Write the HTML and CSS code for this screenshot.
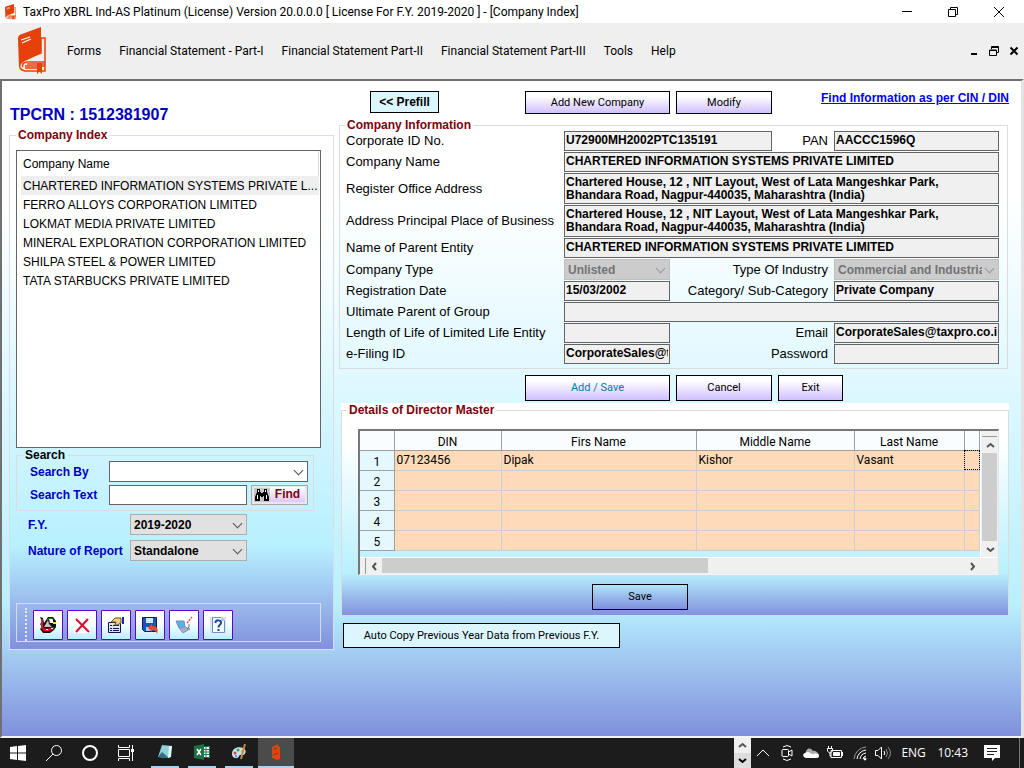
FILE: index.html
```html
<!DOCTYPE html>
<html lang="en">
<head>
<meta charset="utf-8">
<title>TaxPro XBRL Ind-AS Platinum</title>
<link rel="stylesheet" href="styles.css">
</head>
<body>
<svg class="defs" aria-hidden="true">
  <symbol id="book" viewBox="0 0 28 48">
    <path fill="#e4420a" d="M0 12C0 9 1 8 4 7L23 0V26L9 33C4 35 2 38 1 40Z"/>
    <path fill="none" stroke="#e4420a" stroke-width="1.500" d="M23 11H27V44H7C2 43 1 40 2 37C3 33 9 32 23 26V11M5 40C3 37 7 35 9 35H27M9 37H27M7 39H27M7 41H20"/>
    <path fill="#e4420a" d="M19 36H24V47L21.500 44.500L19 47Z"/>
    <path stroke="#fff" stroke-width="1.200" d="M3 13L12 10M4 16L13 12"/>
  </symbol>
</svg>
<header class="titlebar">
  <svg class="app-icon" viewBox="0 0 28 48" preserveAspectRatio="none"><use href="#book"/></svg>
  <h1>TaxPro XBRL Ind-AS Platinum (License) Version 20.0.0.0 [ License For F.Y. 2019-2020 ] - [Company Index]</h1>
  <div class="window-buttons">
    <button aria-label="Minimize"><svg width="12" height="12"><path d="M1 5.500H11"/></svg></button>
    <button aria-label="Restore"><svg width="12" height="12"><path d="M1.500 3.500H8.500V10.500H1.500ZM3.500 3V1.500H10.500V8.500H9"/></svg></button>
    <button aria-label="Close"><svg width="12" height="12"><path d="M1 1L11 11M11 1L1 11"/></svg></button>
  </div>
</header>
<nav class="menubar">
  <svg class="logo"><use href="#book"/></svg>
  <a href="#forms">Forms</a>
  <a href="#part1">Financial Statement - Part-I</a>
  <a href="#part2">Financial Statement Part-II</a>
  <a href="#part3">Financial Statement Part-III</a>
  <a href="#tools">Tools</a>
  <a href="#help">Help</a>
  <div class="child-buttons">
    <button aria-label="Minimize child"><svg width="10" height="10"><path stroke-width="2" d="M2 8H8"/></svg></button>
    <button aria-label="Restore child"><svg width="10" height="10"><path d="M2.500 3V.500H9.500V6.500H7M.500 4H7.500V9.500H.500V4M2 1.500H9M0 4.500H8"/></svg></button>
    <button aria-label="Close child"><svg width="10" height="10"><path stroke-width="2" d="M1.500 1.500L8.500 8.500M8.500 1.500L1.500 8.500"/></svg></button>
  </div>
</nav>
<main class="workspace">
  <section class="left">
    <h2 class="crn">TPCRN : 1512381907</h2>
    <fieldset class="index gradient">
      <legend>Company Index</legend>
      <div class="company-list">
        <table>
          <thead><tr><th>Company Name</th></tr></thead>
          <tbody>
            <tr class="selected"><td>CHARTERED INFORMATION SYSTEMS PRIVATE L...</td></tr>
            <tr><td>FERRO ALLOYS CORPORATION LIMITED</td></tr>
            <tr><td>LOKMAT MEDIA PRIVATE LIMITED</td></tr>
            <tr><td>MINERAL EXPLORATION CORPORATION LIMITED</td></tr>
            <tr><td>SHILPA STEEL &amp; POWER LIMITED</td></tr>
            <tr><td>TATA STARBUCKS PRIVATE LIMITED</td></tr>
          </tbody>
        </table>
      </div>
      <fieldset class="search">
        <legend>Search</legend>
        <div class="search-row">
          <label for="by">Search By</label>
          <span class="select white"><select id="by"><option></option></select></span>
        </div>
        <div class="search-row">
          <label for="text">Search Text</label>
          <input id="text" type="text">
          <button class="find">
            <svg width="16" height="14" viewBox="0 0 16 14"><rect width="16" height="14" fill="#c6c6c6"/><path d="M3 1H6V4H7V5H9V4H10V1H13V4L15 9V13H10V8H9V9H7V8H6V13H1V9L3 4Z"/><path stroke="#fff" d="M4.500 2V4M11.500 2V4M3.500 7V11M12.500 7V11"/></svg>
            <span>Find</span>
          </button>
        </div>
      </fieldset>
      <div class="option-row">
        <label for="fy">F.Y.</label>
        <span class="select"><select id="fy"><option>2019-2020</option></select></span>
      </div>
      <div class="option-row">
        <label for="nature">Nature of Report</label>
        <span class="select"><select id="nature"><option>Standalone</option></select></span>
      </div>
      <div class="toolbar">
        <i class="grip"></i>
        <button aria-label="Import"><svg viewBox="0 0 18 18"><path fill="#111" d="M1 1L4 2L5 7L9 1H14L17 5V11L15 14L11 17H4L1 13L3 11L1 8L3 6Z"/><path fill="#d5122b" d="M2 3H4V11L7 13L15 11V13L11 15H5L2 12Z"/><path fill="#c4c4c4" d="M5 11L9 4L10 8L13 11Z"/><path fill="#fff" d="M10 3H14V7H11ZM7 13H9V14H7ZM12 12H14V13H12Z"/><path fill="none" stroke="#118c36" d="M8 4C9 2 12 2 14 3"/><path fill="#f5dc28" d="M14 6H17V8H14Z"/></svg></button>
        <button aria-label="Delete"><svg viewBox="0 0 18 18"><rect x="1" y="1" width="16" height="16" fill="#fff"/><path stroke="#df0931" stroke-width="2" d="M3 3L16 16M15 3L3 16"/></svg></button>
        <button aria-label="Properties"><svg viewBox="0 0 18 18"><path fill="#d7e4fc" stroke="#141444" d="M1.500 6.500H13.500V16.500H1.500Z"/><path stroke="#16165b" d="M3 9.500H5M6 9.500H12M3 12.500H5M6 12.500H12M3 14.500H5M6 14.500H12"/><path fill="#f3cf81" stroke="#6a5120" d="M4 6L8 2H14V7L10 9H8L9 6Z"/><path fill="#1b24dc" d="M15 1H17V8H15Z"/></svg></button>
        <button aria-label="Save to disk"><svg viewBox="0 0 18 18"><path fill="#1456c5" stroke="#0a1c64" d="M1.500 1.500H15.500V15.500H3.500L1.500 13.500Z"/><path fill="#d6e6fa" d="M5 2H12V7H5Z"/><path fill="#b8c9e9" d="M5 11H10V15H5Z"/><path fill="#ed4b20" d="M7 12L11 8V10C16 10 18 13 16 18C15 15 14 14 11 14V16Z"/></svg></button>
        <button aria-label="Connect"><svg viewBox="0 0 18 18"><path fill="#4db6ee" stroke="#7d87b5" d="M1 5L9 5L10 11L4 12Z"/><path fill="#a5aece" stroke="#8a91b2" d="M4 12L10 11L15 13L8 17Z"/><path fill="none" stroke="#6c7296" d="M12 13L14 11V8"/><path stroke="#c0544c" stroke-width="1.500" stroke-dasharray="2 1" d="M12 7L17 1"/></svg></button>
        <button aria-label="Help"><svg viewBox="0 0 18 18"><rect x="1" y="1" width="16" height="16" fill="#dbe3f0"/><path fill="#f4faff" stroke="#6d91c5" d="M3.500 1.500H12L15.500 5V16.500H3.500Z"/><path fill="#bdd0ec" d="M12 2V5H15Z"/><path fill="none" stroke="#174795" stroke-width="2" d="M6.500 7C6 3 13 4 12 7C11.500 9 9.500 9 9.500 11.500M9.500 13V15"/></svg></button>
      </div>
    </fieldset>
  </section>
  <section class="right">
    <div class="top-actions">
      <button class="pale prefill">&lt;&lt; Prefill</button>
      <button class="violet wide">Add New Company</button>
      <button class="violet mid">Modify</button>
      <a href="#find">Find Information as per CIN / DIN</a>
    </div>
    <fieldset class="info">
      <legend>Company Information</legend>
      <div class="field-row"><label for="cin">Corporate ID No.</label><input class="w-cin" id="cin" value="U72900MH2002PTC135191"><label class="second" for="pan">PAN</label><input class="w-side" id="pan" value="AACCC1596Q"></div>
      <div class="field-row"><label for="cname">Company Name</label><input class="fill" id="cname" value="CHARTERED INFORMATION SYSTEMS PRIVATE LIMITED"></div>
      <div class="field-row"><label for="reg">Register Office Address</label><textarea class="fill" id="reg">Chartered House, 12 , NIT Layout, West of Lata Mangeshkar Park,
Bhandara Road, Nagpur-440035, Maharashtra (India)</textarea></div>
      <div class="field-row"><label for="place">Address Principal Place of Business</label><textarea class="fill tall" id="place">Chartered House, 12 , NIT Layout, West of Lata Mangeshkar Park,
Bhandara Road, Nagpur-440035, Maharashtra (India)</textarea></div>
      <div class="field-row"><label for="parent">Name of Parent Entity</label><input class="fill" id="parent" value="CHARTERED INFORMATION SYSTEMS PRIVATE LIMITED"></div>
      <div class="field-row"><label for="ctype">Company Type</label><span class="select off w-short"><select id="ctype" disabled><option>Unlisted</option></select></span><label class="second" for="ind">Type Of Industry</label><span class="select off w-side"><select id="ind" disabled><option>Commercial and Industrial</option></select></span></div>
      <div class="field-row"><label for="rdate">Registration Date</label><input class="w-short" id="rdate" value="15/03/2002"><label class="second" for="cat">Category/ Sub-Category</label><input class="w-side" id="cat" value="Private Company"></div>
      <div class="field-row"><label for="ult">Ultimate Parent of Group</label><input class="fill" id="ult"></div>
      <div class="field-row"><label for="life">Length of Life of Limited Life Entity</label><input class="w-short" id="life"><label class="second" for="email">Email</label><input class="w-side" id="email" value="CorporateSales@taxpro.co.in"></div>
      <div class="field-row"><label for="efil">e-Filing ID</label><input class="w-short" id="efil" value="CorporateSales@taxpro.co.in"><label class="second" for="pw">Password</label><input class="w-side" id="pw" type="password"></div>
    </fieldset>
    <div class="form-actions">
      <button class="violet wide teal">Add / Save</button>
      <button class="violet mid">Cancel</button>
      <button class="violet small">Exit</button>
    </div>
    <div class="director gradient">
      <fieldset>
        <legend>Details of Director Master</legend>
        <div class="grid">
          <div class="grid-view">
            <table>
              <colgroup><col class="c-no"><col class="c-din"><col class="c-first"><col class="c-mid"><col class="c-last"><col></colgroup>
              <thead><tr><th></th><th>DIN</th><th>Firs Name</th><th>Middle Name</th><th>Last Name</th><th></th></tr></thead>
              <tbody>
                <tr><th>1</th><td>07123456</td><td>Dipak</td><td>Kishor</td><td>Vasant</td><td class="focus"></td></tr>
                <tr><th>2</th><td></td><td></td><td></td><td></td><td></td></tr>
                <tr><th>3</th><td></td><td></td><td></td><td></td><td></td></tr>
                <tr><th>4</th><td></td><td></td><td></td><td></td><td></td></tr>
                <tr><th>5</th><td></td><td></td><td></td><td></td><td></td></tr>
              </tbody>
            </table>
          </div>
          <div class="vbar">
            <i class="split-h"></i>
            <button aria-label="Scroll up"><svg width="9" height="9"><path d="M1 6L4.500 3L8 6"/></svg></button>
            <i class="thumb"></i>
            <button aria-label="Scroll down"><svg width="9" height="9"><path d="M1 3L4.500 6L8 3"/></svg></button>
          </div>
          <div class="hbar">
            <i class="split-v"></i>
            <button aria-label="Scroll left"><svg width="9" height="9"><path d="M6 1L3 4.500L6 8"/></svg></button>
            <div class="track"><i class="thumb"></i></div>
            <button aria-label="Scroll right"><svg width="9" height="9"><path d="M3 1L6 4.500L3 8"/></svg></button>
          </div>
        </div>
        <button class="save">Save</button>
      </fieldset>
    </div>
    <button class="pale copy">Auto Copy Previous Year Data from Previous F.Y.</button>
  </section>
</main>
<footer class="taskbar">
  <button aria-label="Start"><svg viewBox="0 0 16 16"><path fill="#fff" d="M0 2L7 1V7.500H0ZM8 1L16 0V7.500H8ZM0 8.500H7V15L0 14ZM8 8.500H16V16L8 15Z"/></svg></button>
  <button aria-label="Search"><svg class="line" viewBox="0 0 16 16"><circle cx="10.500" cy="5.500" r="5"/><path d="M7 9L0 16"/></svg></button>
  <button aria-label="Cortana"><svg class="line" viewBox="0 0 16 16"><circle cx="8" cy="8" r="7" stroke-width="2"/></svg></button>
  <button aria-label="Task view"><svg class="line" viewBox="0 0 16 16"><path d="M.500 0V2.500H11.500V0M.500 4.500H11.500V11.500H.500ZM.500 16V13.500H11.500V16M14.500 0V16"/><path stroke-width="3" d="M14.500 4V7"/></svg></button>
  <div class="apps">
    <button class="app" aria-label="Notepad"><svg viewBox="0 0 16 16"><path fill="#8ed0dc" d="M5 1L15 2L12 14L1 13Z"/><path fill="#326f83" d="M1 13L5 8L12 14Z"/><path fill="#e6f6f7" d="M12 2L15 2L14 13L11 14Z"/></svg></button>
    <button class="app" aria-label="Excel"><svg viewBox="0 0 16 16"><path fill="#fff" stroke="#1d7044" d="M9 2.500H15.500V13.500H9Z"/><path stroke="#1d7044" d="M9 5.500H15M9 8H15M9 10.500H15M12 2V13"/><path fill="#1d7044" d="M0 2L10 0V16L0 14Z"/><path stroke="#fff" stroke-width="1.500" d="M3 5L7 11M7 5L3 11"/></svg></button>
    <button class="app" aria-label="Paint"><svg viewBox="0 0 16 16"><path fill="#c6e3f3" d="M1 10C1 4 7 2 12 4C17 6 14 13 10 11C8 10 8 15 5 14C2 14 1 12 1 10Z"/><circle cx="4" cy="9" r="1.500" fill="#d8463f"/><circle cx="7" cy="6" r="1.500" fill="#38a352"/><circle cx="11" cy="7" r="1.500" fill="#e9bb38"/><circle cx="5" cy="12" r="1" fill="#3a70cb"/><path stroke="#c58543" stroke-width="2" d="M14 0L10 15"/></svg></button>
    <button class="app active" aria-label="TaxPro"><svg viewBox="0 0 16 16"><path fill="#e4420a" d="M4 3L10 0V2L12 3V15L9 16L4 14Z"/><path stroke="#4b4b4b" d="M6 5L9 4M5 11L10 9"/></svg></button>
  </div>
  <div class="tray">
    <div class="tray-scroll"><button aria-label="Previous"><svg width="9" height="9"><path d="M1 6L4.500 3L8 6"/></svg></button><button class="down" aria-label="Next"><svg width="9" height="9"><path d="M1 3L4.500 6L8 3"/></svg></button></div>
    <button aria-label="Hidden icons"><svg class="line" viewBox="0 0 16 16"><path d="M2 11L8 5L14 11"/></svg></button>
    <button aria-label="Meet"><svg class="line" viewBox="0 0 16 16"><rect x="3" y="4.500" width="6.500" height="7" rx="1"/><path d="M9.500 7L13 5V11L9.500 9M4 2Q8 -1 12 2M4 14Q8 17 12 14"/></svg></button>
    <button aria-label="OneDrive"><svg viewBox="0 0 16 16"><path fill="#ababab" d="M3 9C2 4 7 1 10 6C13 5 15 8 16 10L6 12Z"/><path fill="#fff" d="M2 8C6 5 8 10 10 9C14 8 16 9 16 11Q16 13 14 13H3C-1 12 0 8 2 8Z"/></svg></button>
    <button aria-label="Battery"><svg class="line" viewBox="0 0 16 16"><path d="M4 5.500H14.500V12.500H4ZM15.500 7V11M.500 3.500H5.500V6Q3 10 .500 6ZM1.500 1V3M4.500 1V3M3 8V11H4"/><path fill="#fff" d="M6.500 7.500H12.500V10.500H6.500Z"/></svg></button>
    <button aria-label="Network"><svg class="line" viewBox="0 0 16 16"><path stroke="#999" d="M3 14A13 13 0 0 1 15 2"/><path d="M6 14A10 10 0 0 1 15 5M9 14A7 7 0 0 1 15 8M12 14A4 4 0 0 1 15 11"/><circle cx="14" cy="14" r="1" fill="#fff"/></svg></button>
    <button aria-label="Volume"><svg class="line" viewBox="0 0 16 16"><path d="M.500 5.500H3L6.500 2V14L3 10.500H.500ZM9 6Q10.500 8 9 10"/><path stroke="#888" d="M11 4Q14 8 11 12M13 2Q18 8 13 14"/></svg></button>
    <span class="lang">ENG</span>
    <time>10:43</time>
    <button class="note" aria-label="Notifications"><svg viewBox="0 0 16 16"><path fill="#fff" d="M0 0H16V13H11L8 16V13H0Z"/><path stroke="#1c1c1c" d="M3 3.500H13M3 6.500H13M3 9.500H10"/></svg></button>
  </div>
</footer>
</body>
</html>
```
FILE: styles.css
```css
* { box-sizing: border-box; }
body {
  margin: 0;
  min-height: 100vh;
  display: flex;
  flex-direction: column;
  background: #fff;
  color: #000;
  font: 12px/16px "Liberation Sans", Arial, sans-serif;
}
button, input, select, textarea { font: inherit; color: inherit; margin: 0; padding: 0; border-radius: 0; }
button { background: none; border: 0; }
h1, h2 { margin: 0; font-weight: normal; }
fieldset { margin: 0; padding: 0; border: 1px solid #dcdcdc; min-width: 0; }
legend { color: #80000a; font-weight: bold; line-height: 14px; padding: 0 2px; }
svg { display: block; }
.defs { display: none; }

.titlebar {
  display: flex;
  align-items: center;
  height: 23px;
  padding-left: 5px;
  font-family: Roboto, "Noto Sans", sans-serif;
}
.titlebar h1 { font-size: 12px; line-height: 16px; }
.app-icon { width: 11px; height: 16px; margin-right: 7px; }
.window-buttons { display: flex; margin-left: auto; margin-right: 2px; }
.window-buttons button { width: 46px; height: 22px; display: grid; place-items: center; }
.window-buttons path, .child-buttons path { stroke: #000; fill: none; }

.menubar {
  display: flex;
  align-items: center;
  gap: 18px;
  height: 56px;
  padding: 0 5px 0 17px;
  background: #efefef;
  font-family: Roboto, "Noto Sans", sans-serif;
}
.menubar a { color: #000; text-decoration: none; }
.logo { width: 30px; height: 48px; margin-right: 2px; }
.child-buttons { display: flex; gap: 10px; margin-left: auto; }

.workspace {
  flex: 1;
  display: grid;
  grid-template-columns: minmax(0, 325fr) minmax(0, 670fr);
  gap: 5px;
  padding: 0 12px 0 7px;
  border: 2px solid #707070;
  border-right: 3px solid #e3e3e3;
  border-bottom: 2px solid #f4f4f4;
  background: linear-gradient(#fff 18%, #b8f0ff 80%, #8090dc);
}
.gradient { background: linear-gradient(#fff 18%, #b8f0ff 80%, #8090dc); }

.crn { color: #0000c0; font-size: 16px; line-height: 20px; font-weight: bold; padding: 24px 1px 3px; }
.index { padding: 0 12px 7px 6px; border-color: #dcdce6; }
.company-list { height: 298px; margin-top: 8px; border: 1px solid #646464; background: #fff; padding: 0 1px 0 4px; }
.company-list table { width: 100%; border-collapse: collapse; table-layout: fixed; }
.company-list th, .company-list td {
  height: 19px; padding: 0 0 0 2px; text-align: left; font-size: 12px; line-height: 16px; font-weight: normal;
  overflow: hidden; white-space: nowrap; text-overflow: ellipsis;
}
.company-list th { height: 25px; border-right: 1px solid #dcdcdc; }
.selected { background: #efefef; }

.search { margin: 1px 7px 3px 0; padding: 0 5px 5px 13px; }
.search legend { color: #000; margin-left: -7px; line-height: 12px; }
.search-row { display: flex; align-items: center; height: 21px; }
.search-row + .search-row { margin-top: 2px; }
.index label { color: #0000c0; font-weight: bold; }
.search-row label { width: 79px; flex: none; }
.search-row input { flex: 1; min-width: 0; height: 20px; border: 1px solid #646464; background: #fff; padding: 0 2px; }
.search-row .select { flex: 1; }
.find {
  display: flex; align-items: center; width: 57px; height: 20px; margin-left: 4px; padding: 0 2px;
  border: 1px solid #a8a8a8; background: #e8e8e8; color: #80000a; font-weight: bold;
}
.find span { flex: 1; line-height: 15px; background: linear-gradient(#fff, #dcc8ff); }

.select { position: relative; display: block; height: 21px; }
.select select {
  display: block; appearance: none; width: 100%; height: 100%; padding: 0 16px 0 3px;
  border: 1px solid #adadad; background: #e1e1e1; font-weight: bold; opacity: 1;
}
.select::after {
  content: ""; position: absolute; right: 6px; top: 6px; width: 6px; height: 6px;
  border: solid #555; border-width: 0 1px 1px 0; transform: rotate(45deg); pointer-events: none;
}
.white select { background: #fff; border-color: #646464; }
.off select { background: #ccc; border-color: #bfbfbf; color: #737373; }
.off::after { border-color: #999; }
.option-row { display: flex; align-items: center; height: 21px; padding-left: 12px; margin-bottom: 5px; }
.option-row label { width: 102px; }
.option-row .select { width: 117px; }

.toolbar { display: flex; align-items: center; gap: 4px; height: 39px; margin-top: 42px; padding: 4px 0 0 8px; border: 1px solid #d8dce8; }
.grip { width: 4px; height: 33px; border-left: 2px dotted #e8e8ec; }
.toolbar button {
  width: 30px; height: 30px; border: 1px solid #6400c8; border-radius: 1px; padding: 5px;
  background: linear-gradient(#fff 40%, #b8f0ff);
}
.toolbar svg { width: 18px; height: 18px; }

.right { display: flex; flex-direction: column; }
.top-actions { display: flex; height: 38px; padding: 10px 0 0 31px; align-items: flex-start; }
.top-actions a { margin-left: auto; color: #00f; font-weight: bold; line-height: 14px; }
.violet, .pale, .save { border: 1px solid #000; font-family: Roboto, "Liberation Sans", sans-serif; font-size: 11px; line-height: 14px; }
.violet { background: linear-gradient(#fff 20%, #d0c0ff); height: 26px; margin-right: 6px; }
.top-actions .violet { height: 23px; }
.pale { background: #dcf6ff; }
.prefill { width: 69px; height: 22px; margin-right: 86px; font-size: 12px; font-weight: bold; font-family: "Liberation Sans", Arial, sans-serif; }
.wide { width: 145px; }
.mid { width: 96px; }
.small { width: 65px; }
.teal { color: #0d78a8; }

.info { padding: 0 8px 3px 5px; margin-right: 1px; }
.info legend { height: 12px; line-height: 12px; padding: 0 2px; }
.field-row { display: flex; align-items: center; min-height: 20px; margin-bottom: 1px; }
.field-row label { font-size: 13px; line-height: 16px; width: 219px; padding-left: 1px; flex: none; white-space: nowrap; }
.field-row .second { flex: 1; width: auto; text-align: right; padding-right: 6px; }
.field-row input, .field-row textarea {
  height: 20px; border: 1px solid #646464; background: #f0f0f0; font-weight: bold; padding: 0 1px 2px; line-height: 13px;
}
.field-row textarea { display: block; height: 31px; padding: 2px 1px; resize: none; overflow: hidden; white-space: pre; }
.field-row .tall { height: 32px; }
.field-row .fill { flex: 1; min-width: 0; }
.w-cin { width: 208px; }
.w-short { width: 106px; }
.w-side { width: 165px; }

.form-actions { display: flex; padding: 6px 0 2px 186px; }
.director { margin-left: 2px; }
.director fieldset { padding: 0 9px 5px 16px; }
.director legend { margin-left: -11px; }
.grid {
  display: grid; grid-template-columns: minmax(0, 1fr) 18px; grid-template-rows: 126px 17px; margin-top: 12px;
  border: 2px solid #777; border-right-color: #e3e3e3; border-bottom-color: #f4f4f4;
  border-width: 2px 1px 1px 2px;
}
.grid-view { overflow: hidden; font-family: Roboto, "Liberation Sans", sans-serif; }
.grid table { width: 100%; border-collapse: collapse; table-layout: fixed; }
.grid th, .grid td { height: 20px; padding: 0 2px; font-size: 12px; line-height: 16px; font-weight: normal; text-align: left; }
.grid td { background: #ffdab9; border: 1px solid #cdcdd2; border-width: 0 1px 1px 0; vertical-align: top; line-height: 18px; }
.grid th { text-align: center; border: 1px solid #a0a0a0; border-width: 0 1px 1px 0; background: #fafdff; vertical-align: bottom; }
.grid thead th { height: 19px; }
.grid tbody th { background: #e5f8ff; }
.c-no { width: 34px; }
.c-din { width: 107px; }
.c-first { width: 195px; }
.c-mid { width: 158px; }
.c-last { width: 110px; }
.grid td.focus { outline: 1px dotted #000; outline-offset: -1px; }
.vbar, .hbar { display: flex; background: #f0f0f0; }
.vbar { flex-direction: column; padding: 0 1px; border-left: 1px solid #fff; }
.vbar button, .hbar button { width: 16px; height: 16px; display: grid; place-items: center; flex: none; }
.vbar path, .hbar path, .tray-scroll path { stroke: #555; stroke-width: 2; fill: none; }
.split-h { height: 6px; border-bottom: 1px solid #999; }
.vbar .thumb { flex: 1; background: #cdcdcd; }
.hbar { grid-column: 1 / 3; padding-right: 18px; border-top: 1px solid #fff; }
.split-v { width: 6px; border-right: 1px solid #999; }
.track { flex: 1; }
.track .thumb { display: block; width: 56%; height: 15px; background: #cdcdcd; }
.save { display: block; width: 96px; height: 26px; margin: 9px auto 0 234px; background: linear-gradient(#b0e4fc, #8090dc); }
.copy { width: 277px; height: 25px; margin: 7px 0 0 4px; }

.taskbar { display: flex; align-items: center; height: 30px; background: #1c1c1c; color: #fff; }
.taskbar > button { width: 36px; height: 30px; padding: 0 10px; }
.taskbar svg { width: 16px; height: 16px; }
.line { fill: none; stroke: #fff; }
.apps { display: flex; align-self: stretch; gap: 9px; margin-left: 7px; }
.app { width: 28px; padding: 0 6px; border-bottom: 2px solid #a6d4f7; }
.app.active { width: 36px; padding: 0 10px; margin-left: -4px; background: #4b4b4b; }
.tray { display: flex; align-items: center; align-self: stretch; margin-left: auto; padding-right: 4px; font-family: "Open Sans", "Noto Sans", sans-serif; }
.tray > button { width: 24px; padding: 0 4px; }
.tray-scroll { display: flex; flex-direction: column; width: 17px; height: 30px; background: #f0f0f0; }
.tray-scroll button { flex: 1; display: grid; place-items: center; }
.tray-scroll svg { width: 9px; height: 9px; }
.tray-scroll .down { background: #ddd; }
.tray-scroll .down path { stroke: #000; }
.lang { margin-left: 6px; width: 36px; }
.tray .note { margin: 0 12px; padding: 0 4px; }
.tray::after { content: ""; align-self: stretch; border-left: 1px solid #777; margin-left: 3px; }
```
